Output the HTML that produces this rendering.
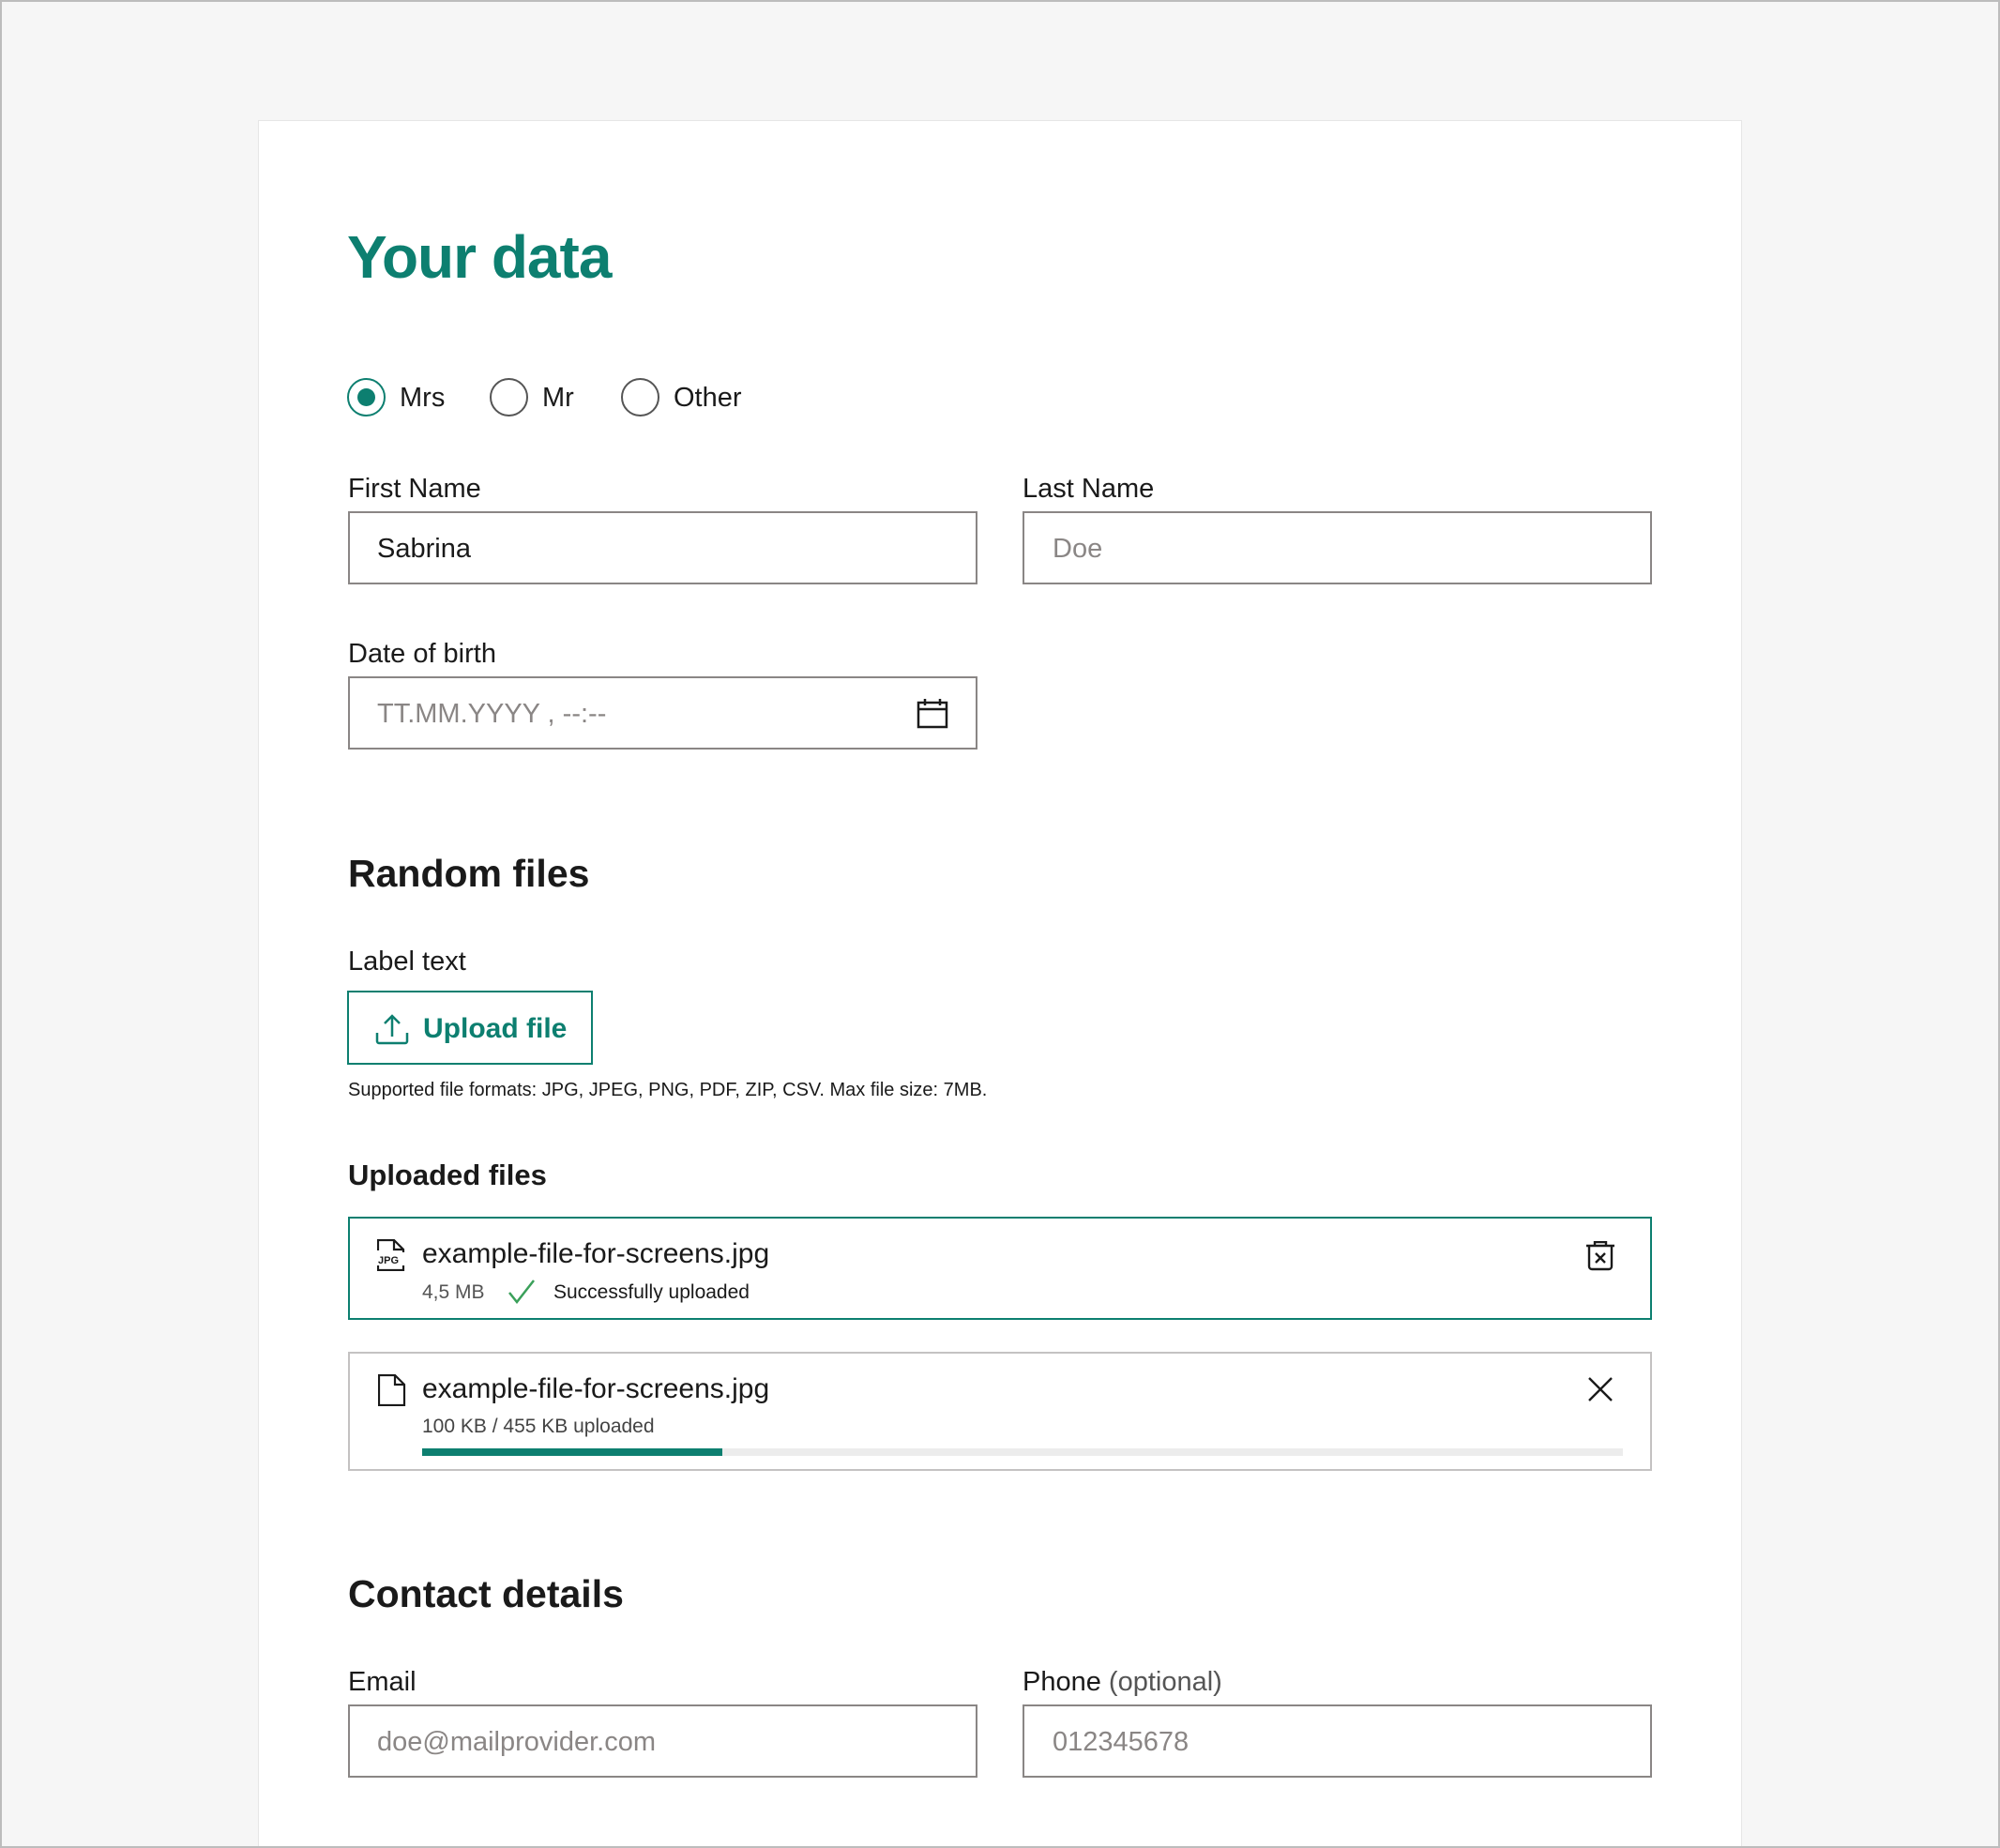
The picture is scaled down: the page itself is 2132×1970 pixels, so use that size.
<!DOCTYPE html>
<html><head><meta charset="utf-8"><style>
*{margin:0;padding:0;box-sizing:border-box}
html,body{width:2132px;height:1970px;overflow:hidden}
body{background:#f6f6f6;font-family:"Liberation Sans",sans-serif;color:#1a1a1a;position:relative}
.frame{position:absolute;left:0;top:0;width:2132px;height:1970px;border:2px solid #bdbdbd;z-index:5;pointer-events:none}
.card{position:absolute;left:275px;top:128px;width:1582px;height:1900px;background:#fff;border:1px solid #e6e6e6}
.a{position:absolute;white-space:nowrap;line-height:1}
.t{transform:translateY(2px)}
.lbl{font-size:29px;color:#1a1a1a}
.inp{position:absolute;border:2px solid #8a8685;background:#fff}
.ph{position:absolute;font-size:29px;color:#8a8685;line-height:1;white-space:nowrap;transform:translateY(2px)}
.teal{color:#0d7f70}
.radio{position:absolute;width:41px;height:41px;border:2px solid #555;border-radius:50%}
</style></head><body>
<div class="card"></div>

<div class="a t teal" style="left:370px;top:240px;font-size:64px;font-weight:bold;letter-spacing:-1px">Your data</div>

<div class="radio" style="left:370px;top:403px;border-color:#0d7f70"><div style="position:absolute;left:9px;top:9px;width:19px;height:19px;border-radius:50%;background:#0d7f70"></div></div>
<div class="a t lbl" style="left:426px;top:408px">Mrs</div>
<div class="radio" style="left:522px;top:403px"></div>
<div class="a t lbl" style="left:578px;top:408px">Mr</div>
<div class="radio" style="left:662px;top:403px"></div>
<div class="a t lbl" style="left:718px;top:408px">Other</div>

<div class="a t lbl" style="left:371px;top:505px">First Name</div>
<div class="inp" style="left:371px;top:545px;width:671px;height:78px"></div>
<div class="a t" style="left:402px;top:569px;font-size:29px">Sabrina</div>
<div class="a t lbl" style="left:1090px;top:505px">Last Name</div>
<div class="inp" style="left:1090px;top:545px;width:671px;height:78px"></div>
<div class="ph" style="left:1122px;top:569px">Doe</div>

<div class="a t lbl" style="left:371px;top:681px">Date of birth</div>
<div class="inp" style="left:371px;top:721px;width:671px;height:78px"></div>
<div class="ph" style="left:402px;top:745px">TT.MM.YYYY , --:--</div>
<svg class="a" style="left:977px;top:743px" width="34" height="34" viewBox="0 0 34 34" fill="none" stroke="#1a1a1a" stroke-width="2.5"><rect x="2" y="6" width="30" height="26"/><line x1="2" y1="13" x2="32" y2="13"/><line x1="9" y1="2" x2="9" y2="9"/><line x1="25" y1="2" x2="25" y2="9"/></svg>

<div class="a t" style="left:371px;top:909px;font-size:41px;font-weight:bold">Random files</div>
<div class="a t lbl" style="left:371px;top:1009px">Label text</div>
<div style="position:absolute;left:370px;top:1056px;width:262px;height:79px;border:2px solid #0d7f70"></div>
<svg class="a" style="left:400px;top:1080px" width="36" height="34" viewBox="0 0 36 34" fill="none" stroke="#0d7f70" stroke-width="2.5"><path d="M2 21v9a2 2 0 0 0 2 2h28a2 2 0 0 0 2-2v-9"/><path d="M18 25V3M10 11l8-8 8 8"/></svg>
<div class="a t teal" style="left:451px;top:1080px;font-size:30px;font-weight:bold">Upload file</div>
<div class="a t" style="left:371px;top:1150px;font-size:20px">Supported file formats: JPG, JPEG, PNG, PDF, ZIP, CSV. Max file size: 7MB.</div>

<div class="a t" style="left:371px;top:1235px;font-size:31px;font-weight:bold">Uploaded files</div>

<div style="position:absolute;left:371px;top:1297px;width:1390px;height:110px;border:2px solid #0d7f70"></div>
<svg class="a" style="left:402px;top:1321px" width="30" height="34" viewBox="0 0 30 34" fill="none" stroke="#1a1a1a" stroke-width="2.2"><path d="M1 12V1h17l10 10v3M1 28v5h27v-5"/><path d="M18 1v10h10"/><text x="1" y="26" font-size="11" font-family="Liberation Sans" fill="#1a1a1a" stroke="none" font-weight="bold">JPG</text></svg>
<div class="a t" style="left:450px;top:1320px;font-size:30px">example-file-for-screens.jpg</div>
<div class="a t" style="left:450px;top:1365px;font-size:21px;color:#555">4,5 MB</div>
<svg class="a" style="left:541px;top:1363px" width="30" height="28" viewBox="0 0 30 28" fill="none" stroke="#3aa05a" stroke-width="2.5"><path d="M2 15l8 10L28 2"/></svg>
<div class="a t" style="left:590px;top:1365px;font-size:21px">Successfully uploaded</div>
<svg class="a" style="left:1690px;top:1323px" width="32" height="32" viewBox="0 0 32 32" fill="none" stroke="#1a1a1a" stroke-width="2.4"><path d="M1 5h30M10 5V1h12v4"/><path d="M4 5v22a3 3 0 0 0 3 3h18a3 3 0 0 0 3-3V5"/><path d="M11 13l10 10M21 13L11 23"/></svg>

<div style="position:absolute;left:371px;top:1441px;width:1390px;height:127px;border:2px solid #c4c2c2"></div>
<svg class="a" style="left:403px;top:1465px" width="30" height="34" viewBox="0 0 30 34" fill="none" stroke="#1a1a1a" stroke-width="2.2"><path d="M1 1h17l10 10v22H1z"/><path d="M18 1v10h10"/></svg>
<div class="a t" style="left:450px;top:1464px;font-size:30px">example-file-for-screens.jpg</div>
<div class="a t" style="left:450px;top:1508px;font-size:21px;color:#444">100 KB / 455 KB uploaded</div>
<svg class="a" style="left:1692px;top:1467px" width="28" height="28" viewBox="0 0 28 28" stroke="#1a1a1a" stroke-width="2.4"><path d="M2 2l24 24M26 2L2 26"/></svg>
<div style="position:absolute;left:450px;top:1544px;width:1280px;height:8px;background:#ececec"></div>
<div style="position:absolute;left:450px;top:1544px;width:320px;height:8px;background:#0d7f70"></div>

<div class="a t" style="left:371px;top:1677px;font-size:41px;font-weight:bold">Contact details</div>
<div class="a t lbl" style="left:371px;top:1777px">Email</div>
<div class="inp" style="left:371px;top:1817px;width:671px;height:78px"></div>
<div class="ph" style="left:402px;top:1841px">doe@mailprovider.com</div>
<div class="a t lbl" style="left:1090px;top:1777px">Phone <span style="color:#555">(optional)</span></div>
<div class="inp" style="left:1090px;top:1817px;width:671px;height:78px"></div>
<div class="ph" style="left:1122px;top:1841px">012345678</div>
<div class="frame"></div>
</body></html>
